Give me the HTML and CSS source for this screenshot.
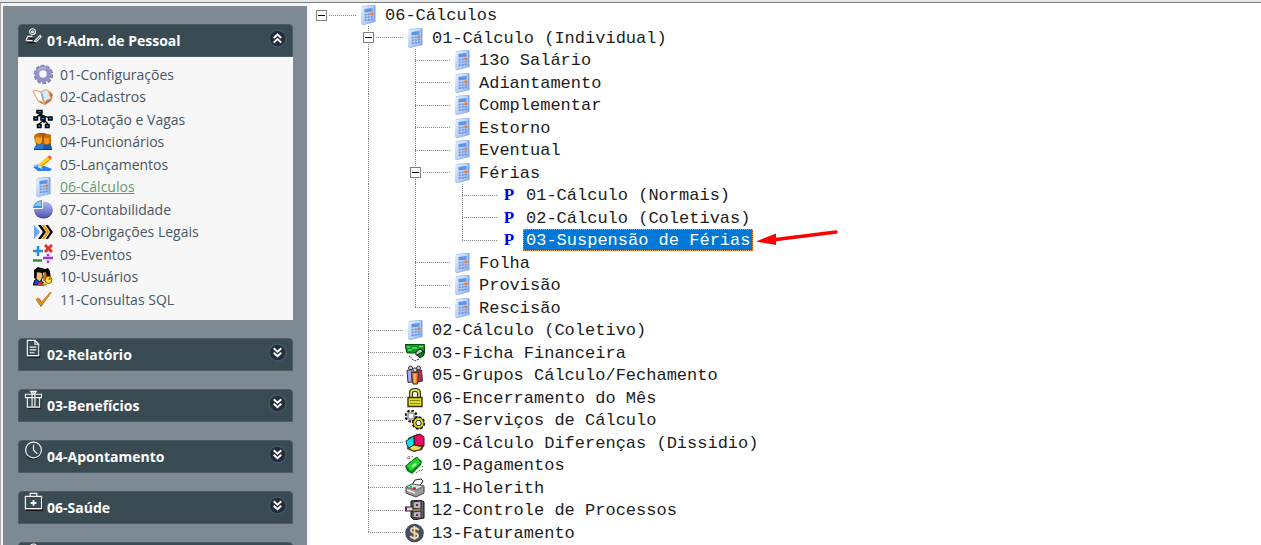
FILE: index.html
```html
<!DOCTYPE html>
<html lang="pt-BR">
<head>
	<meta charset="UTF-8">
	<title>06-Cálculos</title>
	<link rel="stylesheet" href="styles.css">
</head>
<body>
	<svg class="sprite" aria-hidden="true">
		<defs>
			<linearGradient id="calc-fill" x1="0" y1="0" x2="1" y2="1">
				<stop offset="0" stop-color="#e4f0fc"/>
				<stop offset="1" stop-color="#94b4ee"/>
			</linearGradient>
			<linearGradient id="pie-fill" x1="0" y1="0" x2="0" y2="1">
				<stop offset="0" stop-color="#b4bcf4"/>
				<stop offset="1" stop-color="#5058b8"/>
			</linearGradient>
		</defs>
		<symbol id="calc" viewBox="0 0 20 20">
			<path d="M4 1 16 0 17.500 .5V17L5 20 3.400 19Z" fill="#7ea6ea"/>
			<path d="M3.400 1.600 15.800 .4V17L4.600 19.600 3.400 19Z" fill="url(#calc-fill)"/>
			<path d="M6.500 4 14.500 3V6.600L6.500 7.600Z" fill="#5b93e6"/>
			<path d="M6.700 9.700h2M9.700 9.300h2M6.700 12.400h2M9.700 12h2M12.700 11.700h2M6.700 15.200h2M9.700 14.800h2M12.700 14.300h2" stroke="#6d92dc" stroke-width="1.700"/>
			<path d="M12.400 8.800h2.800" stroke="#f07a34" stroke-width="2.600"/>
		</symbol>
		<symbol id="up" viewBox="0 0 20 20">
			<circle cx="10" cy="10" r="9" fill="#222e3a" stroke="#42586e" stroke-width="1.500"/>
			<path d="M6 9.500 10 5.800 14 9.500M6 14.300 10 10.600 14 14.300" fill="none" stroke="#fff" stroke-width="2"/>
		</symbol>
		<symbol id="down" viewBox="0 0 20 20">
			<circle cx="10" cy="10" r="9" fill="#222e3a" stroke="#42586e" stroke-width="1.500"/>
			<path d="M6 5.500 10 9.200 14 5.500M6 10.300 10 14 14 10.300" fill="none" stroke="#fff" stroke-width="2"/>
		</symbol>
	</svg>

	<div class="topbar"></div>
	<div class="app">
		<nav class="sidebar">
			<section class="group">
				<button class="group-header" aria-expanded="true">
					<svg class="group-icon" viewBox="0 0 20 20" fill="none" stroke="#f4f4f4" stroke-width="1.200"><path d="M4 18.500h8M6 14.500h5" stroke="#111"/><circle cx="9" cy="7" r="3"/><circle cx="9" cy="7" r="1" /><path d="M2 16.500 4 12h5M3 16.500h6M11 17 17 11l1 1.500-5 5Z"/></svg>
					<span class="group-title">01-Adm. de Pessoal</span>
					<svg class="chevron"><use href="#up"/></svg>
				</button>
				<ul class="menu">
					<li><a href="#"><svg class="icon" viewBox="0 0 20 20"><circle cx="10.500" cy="10.600" r="8" fill="none" stroke="#7c7c9c" stroke-width="3.400" stroke-dasharray="3.300 1.730"/><circle cx="10" cy="10" r="6" fill="none" stroke="#9494cc" stroke-width="4.600"/><circle cx="10" cy="10" r="8.300" fill="none" stroke="#9090c0" stroke-width="2" stroke-dasharray="3.300 1.915"/><path d="M5 7a6 6 0 0 1 8-2.500" fill="none" stroke="#b8b8e4" stroke-width="1.500"/></svg><span>01-Configurações</span></a></li>
					<li><a href="#"><svg class="icon" viewBox="0 0 20 20"><path d="M0 5 6 15 12 18 18 14 20 8 17 4 11 16Z" fill="#b87440"/><path d="M0 4Q4 3 8 5L11 17Q8 13 5 14Z" fill="#fff" stroke="#f09a48"/><path d="M8 5Q12 2 15 3L18 12Q13 12 11 17Z" fill="#d4ecfc" stroke="#f09a48"/><path d="M9 6l2 9" stroke="#7ab8e4" stroke-width="1.500"/></svg><span>02-Cadastros</span></a></li>
					<li><a href="#"><svg class="icon" viewBox="0 0 20 20"><path d="M7 4v4M4 8l3-3 4 4M7 5l9 4M11 10v4M6 15l5-4 4 4" stroke="#000" stroke-width="1.200" fill="none"/><g fill="#2b8ce8" stroke="#000" stroke-width="1.500"><path d="M4 1.500h5v2.500H4ZM1 8h3.500v3H1ZM8 8h4v3H8ZM15.500 8h3.500v3h-3.500ZM4.500 15.500h3.500v3h-3.500ZM12.500 15.500h3.500v3h-3.500Z"/></g></svg><span>03-Lotação e Vagas</span></a></li>
					<li><a href="#"><svg class="icon" viewBox="0 0 20 20"><path d="M2 3 6 1h5l3 1 4 1v11H3Z" fill="#a8560c"/><path d="M1 17q1-5 5-5h2q4 0 5 5Z" fill="#2a78d4"/><path d="M10 17q0-5 4-5 5 0 5 5Z" fill="#145cae"/><path d="M3 4h6v6q-3 4-6 0Z" fill="#f8a820"/><path d="M11 5h5v6q-2 3-5 0Z" fill="#f49414"/><path d="M1 4q3-5 8-1l-1 3-5-1-1 6ZM11 4q3-4 7 0v8l-2-1V6h-5Z" fill="#c86c0c"/><path d="M1 17.500h18" stroke="#0a3c78"/></svg><span>04-Funcionários</span></a></li>
					<li><a href="#"><svg class="icon" viewBox="0 0 20 20"><path d="M0 13 9 11 19 15 17 17H5Z" fill="#2080f4"/><path d="M1 12 6 11 9 15" fill="none" stroke="#78b8ff" stroke-width="2"/><path d="M6 10 8 14 18 5 15 2Z" fill="#ffcf18"/><path d="M7 13 18 5" stroke="#d89000" stroke-width="1"/><path d="M14.500 3 17 1 19 4 17 5.500Z" fill="#f46058"/><path d="M5 14 6.500 10 8.500 13.500Z" fill="#f8e4b4"/></svg><span>05-Lançamentos</span></a></li>
					<li><a href="#" class="current"><svg class="icon"><use href="#calc"/></svg><span>06-Cálculos</span></a></li>
					<li><a href="#"><svg class="icon" viewBox="0 0 20 20"><ellipse cx="10.500" cy="12" rx="9" ry="7.500" fill="#3a3f88"/><ellipse cx="10.500" cy="10.500" rx="9.300" ry="8" fill="url(#pie-fill)"/><path d="M9 9V1Q1 2 0 9Z" fill="#3c94e0"/><path d="M8 7V2Q3 3 1.500 7Z" fill="#8cc8f4"/><path d="M0 9.500h9.500V1" fill="none" stroke="#f4f8ff"/></svg><span>07-Contabilidade</span></a></li>
					<li><a href="#"><svg class="icon" viewBox="0 0 20 20"><path d="M1 3 7 10 1 17Z" fill="#68a8fa"/><path d="M5 3h3l5 7-5 7H5l5-7Z" fill="#050505"/><path d="M8.500 3h3l5 7-5 7h-3l5-7Z" fill="#f89a18"/><path d="M12.500 3H15l5 7-5 7h-2.500l4.500-7Z" fill="#111"/></svg><span>08-Obrigações Legais</span></a></li>
					<li><a href="#"><svg class="icon" viewBox="0 0 20 20" fill="none" stroke-width="2.500"><path d="M5 2v10M0 7h10" stroke="#2090e8"/><path d="M12 1l7 7M19 1l-7 7" stroke="#e03434" stroke-width="3"/><path d="M0 16.500h9" stroke="#28902c"/><path d="M10 14h10M15 10v2.200M15 16.500v2.500" stroke="#9838dc"/></svg><span>09-Eventos</span></a></li>
					<li><a href="#"><svg class="icon" viewBox="0 0 20 20"><path d="M0 18 2 13 7 11 11 18Z" fill="#1748c8" stroke="#000"/><path d="M10 14 11 4h5l2 4v5Z" fill="#c46c20"/><path d="M3 5 9 4l1 6-3 5-4-3Z" fill="#f8c070" stroke="#000"/><path d="M1 11V3l4-3 7 2 3-1 2 3v8l-3-2-1-5-4 1-5-1-1 7Z" fill="#080808"/><path d="M7 14 10 18 4 19Z" fill="#e03030"/><path d="M11 15 8.500 18h4l1-1" fill="#f4d030" stroke="#6c5000"/><circle cx="15.500" cy="13" r="3.500" fill="#ffe040" stroke="#7c6000"/><circle cx="16.500" cy="12" r="1" fill="#7c6000"/></svg><span>10-Usuários</span></a></li>
					<li><a href="#"><svg class="icon" viewBox="0 0 20 20"><path d="M3 11 8 18 19 3 9 13 6 9Z" fill="#8c5418"/><path d="M2.500 10 5 8.500 8 13 17 3h2L8 17Z" fill="#e08c28"/></svg><span>11-Consultas SQL</span></a></li>
				</ul>
			</section>
			<section class="group">
				<button class="group-header" aria-expanded="false">
					<svg class="group-icon" viewBox="0 0 20 20" fill="none" stroke="#f4f4f4" stroke-width="1.200"><path d="M4 19.200h12.500V7" stroke="#111"/><path d="M3.500 1.500h8l4 4v12h-12ZM11.500 1.500v4h4M6 8.500h7M6 11.500h7M6 14.500h5"/></svg>
					<span class="group-title">02-Relatório</span>
					<svg class="chevron"><use href="#down"/></svg>
				</button>
			</section>
			<section class="group">
				<button class="group-header" aria-expanded="false">
					<svg class="group-icon" viewBox="0 0 20 20" fill="none" stroke="#f4f4f4" stroke-width="1.200"><path d="M4 19.200h13.500V9M19.300 5v4" stroke="#111"/><path d="M1.500 4.500h17v3.500h-17ZM3.500 8v10h13V8M8.500 4.500V18M11.500 4.500V18M9 4 7 1.500h2.500L10 3.500l.5-2H13L11 4"/></svg>
					<span class="group-title">03-Benefícios</span>
					<svg class="chevron"><use href="#down"/></svg>
				</button>
			</section>
			<section class="group">
				<button class="group-header" aria-expanded="false">
					<svg class="group-icon" viewBox="0 0 20 20" fill="none" stroke="#f4f4f4" stroke-width="1.200"><path d="M3 16q8 7 15-3" stroke="#111"/><circle cx="10" cy="9.500" r="8.300"/><path d="M10 4v5.500l4 4"/></svg>
					<span class="group-title">04-Apontamento</span>
					<svg class="chevron"><use href="#down"/></svg>
				</button>
			</section>
			<section class="group">
				<button class="group-header" aria-expanded="false">
					<svg class="group-icon" viewBox="0 0 20 20" fill="none" stroke="#f4f4f4" stroke-width="1.300"><path d="M2 19.300h17.500V6" stroke="#111"/><path d="M1.500 4.500h17v13h-17ZM6.500 4.500v-3h7v3"/><path d="M10 8.500v6M7 11.500h6" stroke-width="2"/></svg>
					<span class="group-title">06-Saúde</span>
					<svg class="chevron"><use href="#down"/></svg>
				</button>
			</section>
			<section class="group">
				<button class="group-header" aria-expanded="false">
					<svg class="group-icon" viewBox="0 0 20 20" fill="none" stroke="#f4f4f4" stroke-width="1.200"><circle cx="10" cy="5" r="4"/></svg>
				</button>
			</section>
		</nav>

		<main class="content">
			<ul class="tree">
				<li class="row"><span class="branch root"><button class="toggle"></button></span><svg class="icon"><use href="#calc"/></svg><span class="label">06-Cálculos</span></li>
				<li class="row"><span class="guide"></span><span class="branch"><button class="toggle"></button></span><svg class="icon"><use href="#calc"/></svg><span class="label">01-Cálculo (Individual)</span></li>
				<li class="row"><span class="guide line"></span><span class="guide blank"></span><span class="branch"></span><svg class="icon"><use href="#calc"/></svg><span class="label">13o Salário</span></li>
				<li class="row"><span class="guide line"></span><span class="guide blank"></span><span class="branch"></span><svg class="icon"><use href="#calc"/></svg><span class="label">Adiantamento</span></li>
				<li class="row"><span class="guide line"></span><span class="guide blank"></span><span class="branch"></span><svg class="icon"><use href="#calc"/></svg><span class="label">Complementar</span></li>
				<li class="row"><span class="guide line"></span><span class="guide blank"></span><span class="branch"></span><svg class="icon"><use href="#calc"/></svg><span class="label">Estorno</span></li>
				<li class="row"><span class="guide line"></span><span class="guide blank"></span><span class="branch"></span><svg class="icon"><use href="#calc"/></svg><span class="label">Eventual</span></li>
				<li class="row"><span class="guide line"></span><span class="guide blank"></span><span class="branch"><button class="toggle"></button></span><svg class="icon"><use href="#calc"/></svg><span class="label">Férias</span></li>
				<li class="row"><span class="guide line"></span><span class="guide blank"></span><span class="guide line"></span><span class="branch"></span><span class="program">P</span><span class="label">01-Cálculo (Normais)</span></li>
				<li class="row"><span class="guide line"></span><span class="guide blank"></span><span class="guide line"></span><span class="branch"></span><span class="program">P</span><span class="label">02-Cálculo (Coletivas)</span></li>
				<li class="row"><span class="guide line"></span><span class="guide blank"></span><span class="guide line"></span><span class="branch end"></span><span class="program">P</span><span class="label selected">03-Suspensão de Férias<svg class="arrow" viewBox="0 0 86 18"><path d="M20 9.500 80 2" stroke="#fe0000" stroke-width="3.500" stroke-linecap="round"/><path d="M0 11.500 20 3.500V15Z" fill="#fe0000"/></svg></span></li>
				<li class="row"><span class="guide line"></span><span class="guide blank"></span><span class="branch"></span><svg class="icon"><use href="#calc"/></svg><span class="label">Folha</span></li>
				<li class="row"><span class="guide line"></span><span class="guide blank"></span><span class="branch"></span><svg class="icon"><use href="#calc"/></svg><span class="label">Provisão</span></li>
				<li class="row"><span class="guide line"></span><span class="guide blank"></span><span class="branch end"></span><svg class="icon"><use href="#calc"/></svg><span class="label">Rescisão</span></li>
				<li class="row"><span class="guide"></span><span class="branch"></span><svg class="icon"><use href="#calc"/></svg><span class="label">02-Cálculo (Coletivo)</span></li>
				<li class="row"><span class="guide"></span><span class="branch"></span><svg class="icon" viewBox="0 0 20 20"><path d="M0 1.500h19.500v8.500H2Z" fill="#0b9a20" stroke="#064c10"/><path d="M2 4h3M7 5h5M3 7h4M14 3.500h4" stroke="#68e070" stroke-width="1.300"/><path d="M11 9 15 6l3 2-2 5-5-1Z" fill="#c8c8c8" stroke="#222"/><path d="M12 12 19 8v4l-4 3Z" fill="#088018" stroke="#042c08"/><path d="M4 13l3 2M7 16l3 2 4-2" fill="none" stroke="#333" stroke-dasharray="2 1"/></svg><span class="label">03-Ficha Financeira</span></li>
				<li class="row"><span class="guide"></span><span class="branch"></span><svg class="icon" viewBox="0 0 20 20"><g stroke="#333"><circle cx="5.500" cy="3" r="2" fill="#ccc"/><circle cx="13.500" cy="3" r="2" fill="#ccc"/><path d="M2 5.500 7 4.500v12.500l-4 .5Z" fill="#a8a8f4"/><path d="M12 5h4.500l1 11-5 1Z" fill="#c42850"/><circle cx="10" cy="5" r="2" fill="#ddd"/><path d="M6.500 7.500h7l-1 11.500H8Z" fill="#f88018"/></g><path d="M9 9h1.500v9H9" fill="#ffc060"/></svg><span class="label">05-Grupos Cálculo/Fechamento</span></li>
				<li class="row"><span class="guide"></span><span class="branch"></span><svg class="icon" viewBox="0 0 20 20"><path d="M6 10V5q0-3 4-3t4 3v5" fill="none" stroke="#33330c" stroke-width="4"/><path d="M6 10V5q0-3 4-3t4 3v5" fill="none" stroke="#dcdc5c" stroke-width="1.800"/><path d="M3 9.500h14v9H3Z" fill="#e4dc20" stroke="#33330c" stroke-width="1.400"/><path d="M5 12.500h10M5 15.500h10" stroke="#8c8408" stroke-width="1.200"/></svg><span class="label">06-Encerramento do Mês</span></li>
				<li class="row"><span class="guide"></span><span class="branch"></span><svg class="icon" viewBox="0 0 20 20" fill="none"><circle cx="6" cy="6" r="4.500" stroke="#111" stroke-width="4" stroke-dasharray="2 1.500"/><circle cx="6" cy="6" r="3.500" stroke="#aaa" stroke-width="2"/><circle cx="13.500" cy="13" r="5.200" stroke="#18180a" stroke-width="3" stroke-dasharray="2.400 1.600"/><circle cx="13.500" cy="13" r="4" stroke="#18180a" stroke-width="3.600"/><circle cx="13.500" cy="13" r="4" stroke="#e4d820" stroke-width="2"/></svg><span class="label">07-Serviços de Cálculo</span></li>
				<li class="row"><span class="guide"></span><span class="branch"></span><svg class="icon" viewBox="0 0 20 20"><path d="M2 16 9 19 17 17 19 13V4L12 1 3 5Z" fill="#444"/><path d="M1 8 9 3V12L4 15Q1 12 1 8Z" fill="#18dce4" stroke="#153838"/><path d="M9 3 15 1 19 4V13L10 12Z" fill="#e40c64" stroke="#58042c"/><path d="M4 15 9 12 17 14 14 17 8 18Z" fill="#f0e040" stroke="#4c4410"/></svg><span class="label">09-Cálculo Diferenças (Dissidio)</span></li>
				<li class="row"><span class="guide"></span><span class="branch"></span><svg class="icon" viewBox="0 0 20 20"><path d="M0 11 11 2 17 6 16 10 7 19 2 16Z" fill="#0a7c16"/><path d="M1 11 12 2 16 8 6 17Z" fill="#24d034" stroke="#0a7c16"/><path d="M6 11 10 8l2 1-4 4Z" fill="#8cf890"/><path d="M2 3h3M4 1v4M7 1l1 2M11 18l4-3M16 16l2-2M17 12l2-1" stroke="#444" stroke-dasharray="1 1"/></svg><span class="label">10-Pagamentos</span></li>
				<li class="row"><span class="guide"></span><span class="branch"></span><svg class="icon" viewBox="0 0 20 20"><path d="M7 7 10 2 16 1 18 3 14 9Z" fill="#fff" stroke="#222"/><path d="M1 9 7 6 19 8V15L11 19 1 15Z" fill="#9c9c9c" stroke="#444"/><path d="M1 9 7 6 19 8 11 12Z" fill="#e4e4e4" stroke="#666"/><path d="M2 12 10 15" stroke="#eee" stroke-width="1.500"/><path d="M5 8.500l2 .5" stroke="#10b030" stroke-width="2"/><path d="M8 10l3 .5" stroke="#e81818" stroke-width="2"/></svg><span class="label">11-Holerith</span></li>
				<li class="row"><span class="guide"></span><span class="branch"></span><svg class="icon" viewBox="0 0 20 20"><path d="M6 1 15 0 19 2V18L9 20 6 17Z" fill="#606060" stroke="#111"/><path d="M8 2 16 1V9L8 8.500ZM8 12 16 11V18L8 17.500Z" fill="#b4b4b4" stroke="#333"/><path d="M0 7h8v4H0Z" fill="#ddd" stroke="#222"/><path d="M0 7h2v4H0ZM11 4h2v2h-2ZM11 14h2v2h-2Z" fill="#8c1078"/><path d="M8 10h7" stroke="#c8b430"/></svg><span class="label">12-Controle de Processos</span></li>
				<li class="row"><span class="guide"></span><span class="branch end"></span><svg class="icon" viewBox="0 0 20 20"><circle cx="9.500" cy="10" r="9.300" fill="#454e62"/><path d="M13.500 7.200Q13 5 9.500 5T6 7.500Q6 9.300 9.500 10T13 12.700Q13 15 9.500 15T5.500 12.700M9.500 3v14" fill="none" stroke="#f6d9a0" stroke-width="1.800"/></svg><span class="label">13-Faturamento</span></li>
			</ul>
		</main>
	</div>
</body>
</html>
```
FILE: styles.css
```css
* {
	box-sizing: border-box;
}

body {
	margin: 0;
	height: 100vh;
	display: flex;
	flex-direction: column;
	overflow: hidden;
	background-color: #fff;
}

ul {
	margin: 0;
	padding: 0;
	list-style: none;
}

.sprite {
	position: absolute;
	width: 0;
	height: 0;
}

.topbar {
	flex: none;
	height: 3px;
	background-color: #e4e8e6;
	border-bottom: 1px solid #7b7b7b;
}

.app {
	flex: 1;
	min-height: 0;
	display: flex;
	border-left: 1px solid #a8a8a8;
}

.icon {
	flex: none;
	width: 20px;
	height: 20px;
}

/* side menu */
.sidebar {
	flex: none;
	width: 309px;
	padding: 18px 14px 0 15px;
	background-color: #7d8a94;
	border: solid #f8f4f6;
	border-width: 3px 3px 0 2px;
	display: flex;
	flex-direction: column;
	gap: 18px;
	overflow: hidden;
	font-family: "Open Sans", "Noto Sans", sans-serif;
	font-size: 14px;
}

.group {
	flex: none;
}

.group-header {
	width: 100%;
	height: 33px;
	padding: 0 5px;
	display: flex;
	align-items: center;
	gap: 4px;
	border: 1px solid #4b5c66;
	border-radius: 4px 4px 0 0;
	background-color: #3a4a52;
	color: #fff;
	font: inherit;
	font-weight: 700;
	text-align: left;
	cursor: pointer;
}

.group-icon {
	flex: none;
	width: 19px;
	height: 19px;
	align-self: flex-start;
}

.group-title {
	flex: 1;
}

.chevron {
	flex: none;
	width: 19px;
	height: 19px;
	margin-bottom: 5px;
}

.menu {
	padding: 6px 0 10px 15px;
	background-color: #f7f7f7;
}

.menu li {
	height: 22px;
}

.menu li:nth-child(even) {
	height: 23px;
}

.menu a {
	height: 100%;
	display: inline-flex;
	align-items: center;
	gap: 7px;
	color: #465664;
	text-decoration: none;
}

.menu a.current {
	color: #5c9c74;
}

.menu a.current span {
	text-decoration: underline;
}

/* tree */
.content {
	flex: 1;
	min-width: 0;
	padding: 1px 0 0 11px;
}

.row {
	height: 22px;
	display: flex;
	align-items: center;
	font-family: "Liberation Mono", monospace;
	font-size: 17px;
	color: #1c1c1c;
	white-space: nowrap;
}

.row:nth-child(even) {
	height: 23px;
}

.guide,
.branch {
	--dots-x: repeating-linear-gradient(to right, #808080 0 1px, transparent 1px 2px);
	--dots-y: repeating-linear-gradient(to bottom, #808080 0 1px, transparent 1px 2px);
	flex: none;
	align-self: stretch;
	background-repeat: no-repeat;
}

.guide {
	width: 47px;
}

/* the line of a level runs at the right edge of its parent's column */
.guide.line:first-child {
	background-image: var(--dots-y);
	background-size: 1px 100%;
	width: 47px;
	margin-left: 47px;
}

.guide.blank {
	display: none;
}

.guide.line {
	background-image: var(--dots-y);
	background-size: 1px 100%;
}

.branch {
	width: 37px;
	display: flex;
	align-items: center;
	background-image: var(--dots-y), var(--dots-x);
	background-size: 1px 100%, 36px 1px;
	background-position: 0 0, 0 50%;
}

.branch.end {
	background-size: 1px 50%, 36px 1px;
}

.branch.root {
	background-size: 0 0, 36px 1px;
}

.toggle {
	width: 11px;
	height: 11px;
	margin-left: -5px;
	padding: 0 1px;
	display: flex;
	align-items: center;
	border: 1px solid #808080;
	background-color: #fff;
	outline: 1px solid #fff;
}

.toggle::before {
	content: "";
	width: 100%;
	height: 1px;
	background-color: #000;
}

.program {
	flex: none;
	width: 20px;
	text-align: center;
	font-family: "Liberation Serif", serif;
	font-size: 17px;
	font-weight: 700;
	color: #0000e8;
}

.label {
	position: relative;
	margin-left: 4px;
	padding: 1px 2px 0;
	border: 1px dotted transparent;
	line-height: 19px;
}

.label.selected {
	background-color: #0078d7;
	border-color: #f09040;
	color: #fff;
}

.arrow {
	position: absolute;
	left: 100%;
	top: 0;
	width: 86px;
	height: 18px;
	margin-left: 4px;
}
```
